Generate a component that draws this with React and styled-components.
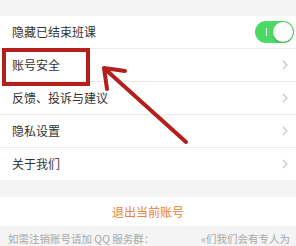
import React from 'react';
import styled, { createGlobalStyle } from 'styled-components';

const GlobalStyle = createGlobalStyle`
  html, body {
    margin: 0;
    padding: 0;
    background: #f4f4f4;
  }
  body {
    font-family: "Noto Sans CJK SC", "Noto Sans", sans-serif;
  }
`;

const Page = styled.div`
  position: relative;
  width: 296px;
  height: 246px;
  overflow: hidden;
  background: #f4f4f4;
  display: flex;
  flex-direction: column;
`;

const Spacer = styled.div`
  height: ${(p) => p.h}px;
  flex-shrink: 0;
`;

const Group = styled.div`
  background: #fff;
  display: flex;
  flex-direction: column;
`;

const Row = styled.div`
  height: 32px;
  display: flex;
  align-items: center;
  justify-content: space-between;
  padding: 0 8px 0 12px;
  border-bottom: 1px solid #ebebeb;
  &:last-child {
    border-bottom: none;
  }
`;

const Label = styled.span`
  font-size: 12px;
  color: #333;
  line-height: 1;
`;

const Toggle = styled.div`
  position: relative;
  width: 39px;
  height: 22px;
  margin-right: -6px;
  border-radius: 11px;
  background: #4cd964;
  &::before {
    content: '';
    position: absolute;
    left: 11px;
    top: 7px;
    width: 1px;
    height: 8px;
    background: #fff;
  }
  &::after {
    content: '';
    position: absolute;
    right: 1px;
    top: 1px;
    width: 20px;
    height: 20px;
    border-radius: 50%;
    background: #fff;
    box-shadow: 0 1px 2px rgba(0, 0, 0, 0.25);
  }
`;

const Chevron = () => (
  <svg width="6" height="10" viewBox="0 0 6 10">
    <path d="M1 1l4 4-4 4" fill="none" stroke="#c7c7cc" strokeWidth="1.2" />
  </svg>
);

const LogoutRow = styled.div`
  height: 32px;
  background: #fff;
  display: flex;
  align-items: center;
  justify-content: center;
  font-size: 12px;
  color: #e8833a;
`;

const Note = styled.div`
  display: flex;
  justify-content: space-between;
  padding: 5px 6px 0 8px;
  font-size: 10.5px;
  color: #a8a8a8;
  white-space: nowrap;
`;

const HighlightBox = styled.div`
  position: absolute;
  left: 2px;
  top: 48px;
  width: 88px;
  height: 38px;
  box-sizing: border-box;
  border: 4px solid #b3201c;
`;

const ArrowSvg = styled.svg`
  position: absolute;
  left: 0;
  top: 0;
`;

const items = ['账号安全', '反馈、投诉与建议', '隐私设置', '关于我们'];

export default function App() {
  return (
    <Page>
      <GlobalStyle />
      <Spacer h={16} />
      <Group>
        <Row>
          <Label>隐藏已结束班课</Label>
          <Toggle />
        </Row>
        {items.map((t) => (
          <Row key={t}>
            <Label>{t}</Label>
            <Chevron />
          </Row>
        ))}
      </Group>
      <Spacer h={17} />
      <LogoutRow>退出当前账号</LogoutRow>
      <Note>
        <span>如需注销账号请加 QQ 服务群：</span>
        <span>«们我们会有专人为</span>
      </Note>
      <HighlightBox />
      <ArrowSvg width="296" height="246">
        <g stroke="#b3201c" strokeWidth="4" fill="none" strokeLinecap="round" strokeLinejoin="round">
          <path d="M186 142L105 69" />
          <path d="M125 71L104 68L107 89" />
        </g>
      </ArrowSvg>
    </Page>
  );
}
